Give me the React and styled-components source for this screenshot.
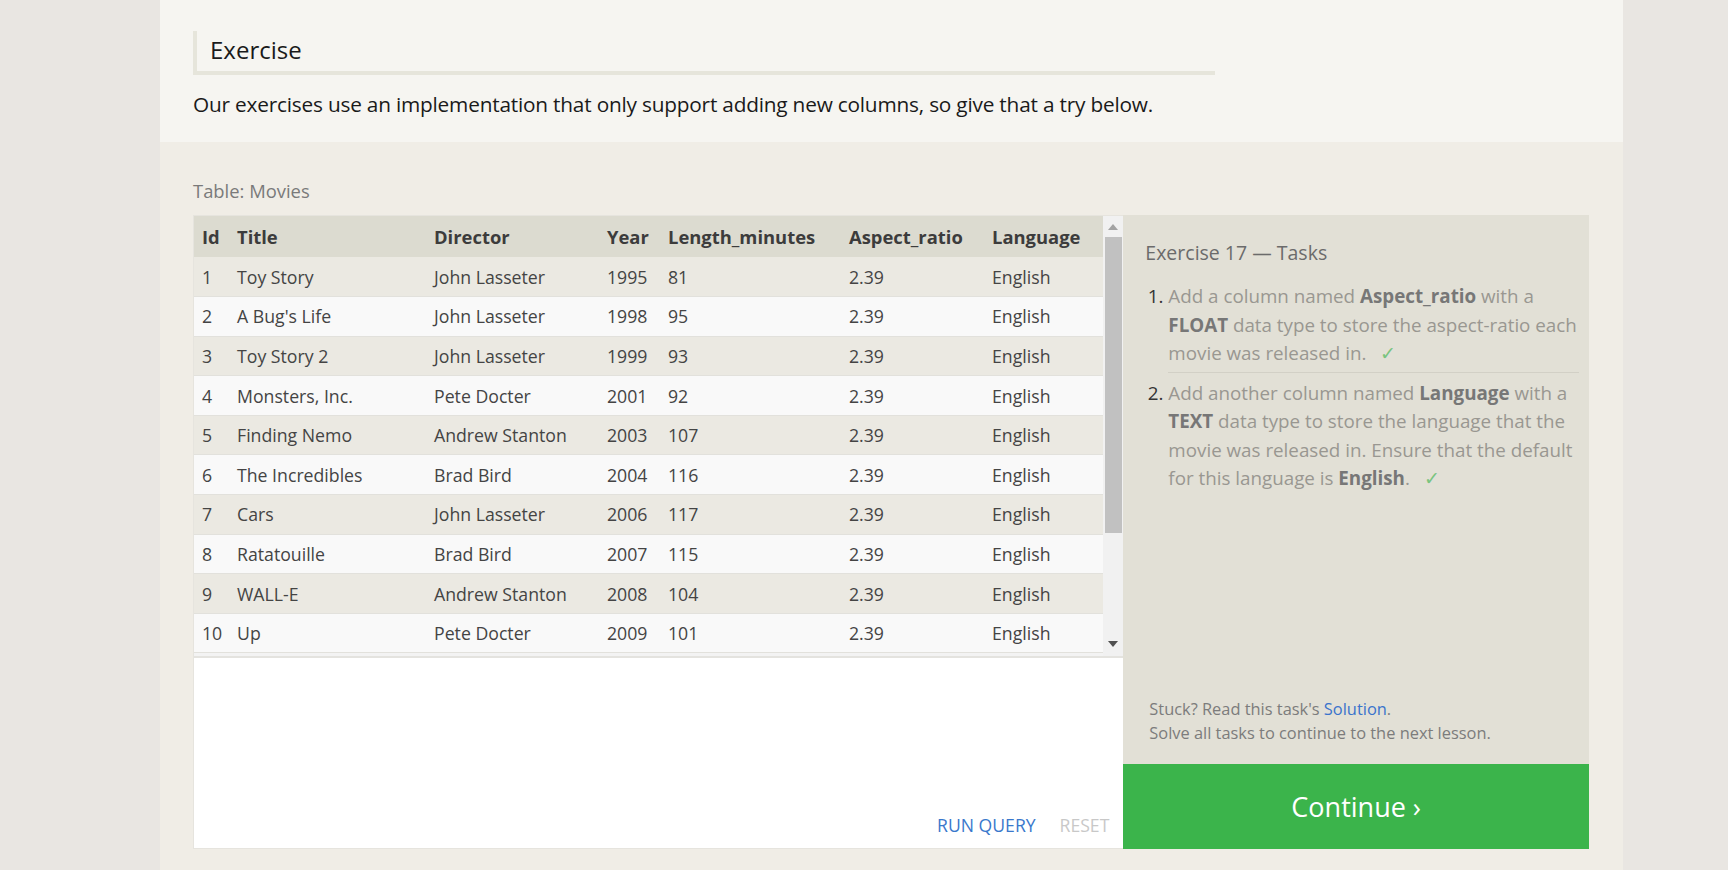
import React from 'react';
import styled, { createGlobalStyle } from 'styled-components';

const GlobalStyle = createGlobalStyle`
  html, body {
    margin: 0;
    padding: 0;
    background: #e9e6e2;
    font-family: "Open Sans", "Noto Sans", sans-serif;
  }
  * { box-sizing: border-box; }
`;

const movies = [
  [1, 'Toy Story', 'John Lasseter', 1995, 81],
  [2, "A Bug's Life", 'John Lasseter', 1998, 95],
  [3, 'Toy Story 2', 'John Lasseter', 1999, 93],
  [4, 'Monsters, Inc.', 'Pete Docter', 2001, 92],
  [5, 'Finding Nemo', 'Andrew Stanton', 2003, 107],
  [6, 'The Incredibles', 'Brad Bird', 2004, 116],
  [7, 'Cars', 'John Lasseter', 2006, 117],
  [8, 'Ratatouille', 'Brad Bird', 2007, 115],
  [9, 'WALL-E', 'Andrew Stanton', 2008, 104],
  [10, 'Up', 'Pete Docter', 2009, 101],
];

const columns = [
  { name: 'Id', width: 35 },
  { name: 'Title', width: 197 },
  { name: 'Director', width: 173 },
  { name: 'Year', width: 61 },
  { name: 'Length_minutes', width: 181 },
  { name: 'Aspect_ratio', width: 143 },
  { name: 'Language', width: 119 },
];

const Arrow = ({ up, color }) => (
  <svg width="10" height="6" viewBox="0 0 10 6">
    <path d={up ? 'M0 6 L5 0 L10 6 Z' : 'M0 0 L10 0 L5 6 Z'} fill={color} />
  </svg>
);

const App = () => (
  <>
    <GlobalStyle />
    <Page>
      <Lesson>
        <Intro>
          <Heading>Exercise</Heading>
          <Lead>
            Our exercises use an implementation that only support adding new columns, so give that a try below.
          </Lead>
        </Intro>

        <ExerciseArea>
          <TableLabel>Table: Movies</TableLabel>
          <Workspace>
            <EditorPane>
              <ResultsArea>
                <Results>
                  <colgroup>
                    {columns.map((c) => (
                      <col key={c.name} style={{ width: c.width }} />
                    ))}
                  </colgroup>
                  <thead>
                    <tr>
                      {columns.map((c) => (
                        <HeadCell key={c.name}>{c.name}</HeadCell>
                      ))}
                    </tr>
                  </thead>
                  <tbody>
                    {movies.map((m, i) => (
                      <Row key={m[0]} $odd={i % 2 === 0}>
                        {m.map((v, j) => (
                          <Cell key={j}>{v}</Cell>
                        ))}
                        <Cell>2.39</Cell>
                        <Cell>English</Cell>
                      </Row>
                    ))}
                  </tbody>
                </Results>
                <ScrollTrack>
                  <ScrollButton>
                    <Arrow up color="#a3a3a3" />
                  </ScrollButton>
                  <ScrollThumb />
                  <ScrollButton $bottom>
                    <Arrow color="#505050" />
                  </ScrollButton>
                </ScrollTrack>
              </ResultsArea>
              <QueryArea>
                <QueryActions>
                  <ActionLink>RUN QUERY</ActionLink>
                  <ActionLink $disabled>RESET</ActionLink>
                </QueryActions>
              </QueryArea>
            </EditorPane>

            <TaskPanel>
              <TaskBody>
                <TaskTitle>Exercise 17 — Tasks</TaskTitle>
                <TaskList>
                  <Task>
                    Add a column named <b>Aspect_ratio</b> with a <b>FLOAT</b> data type to store the
                    aspect-ratio each movie was released in.<Check>✓</Check>
                  </Task>
                  <Task>
                    Add another column named <b>Language</b> with a <b>TEXT</b> data type to store the
                    language that the movie was released in. Ensure that the default for this language
                    is <b>English</b>.<Check>✓</Check>
                  </Task>
                </TaskList>
              </TaskBody>
              <Help>
                Stuck? Read this task's <HelpLink>Solution</HelpLink>.
                <br />
                Solve all tasks to continue to the next lesson.
              </Help>
              <ContinueButton>Continue ›</ContinueButton>
            </TaskPanel>
          </Workspace>
        </ExerciseArea>
      </Lesson>
    </Page>
  </>
);

const Page = styled.div`
  height: 870px;
  overflow: hidden;
`;

const Lesson = styled.div`
  margin-left: 160px;
  width: 1463px;
  height: 870px;
  background: #f0ede6;
`;

const Intro = styled.div`
  background: #f6f5f1;
  height: 142px;
  padding: 31px 33px 0;
`;

const Heading = styled.h2`
  margin: 0;
  width: 1022px;
  height: 44px;
  border-left: 4px solid #e6e5db;
  border-bottom: 4px solid #e6e5db;
  padding-left: 13px;
  font-size: 24px;
  font-weight: 400;
  line-height: 38px;
  color: #1a1a1a;
`;

const Lead = styled.p`
  margin: 15px 0 0;
  font-size: 20.8px;
  line-height: 28px;
  color: #1a1a1a;
  letter-spacing: -0.2px;
`;

const ExerciseArea = styled.div`
  padding: 35px 34px 0 33px;
`;

const TableLabel = styled.div`
  font-size: 18.4px;
  line-height: 27px;
  color: #7a7a7a;
  margin-bottom: 11px;
`;

const Workspace = styled.div`
  display: flex;
  height: 634px;
`;

const EditorPane = styled.div`
  width: 931px;
  background: #fff;
  border: 1px solid #e6e4de;
  border-right: none;
  display: flex;
  flex-direction: column;
`;

const ResultsArea = styled.div`
  display: flex;
  height: 442px;
  border-bottom: 2px solid #e4e3df;
  background: #f3f3f3;
`;

const Results = styled.table`
  width: 909px;
  table-layout: fixed;
  border-collapse: collapse;
  align-self: flex-start;
  font-size: 17.7px;
  color: #444;
`;

const HeadCell = styled.th`
  height: 41px;
  padding: 0 0 0 8px;
  background: #dcdbd0;
  text-align: left;
  font-weight: 700;
  font-size: 18.4px;
  color: #3c3c3c;
  white-space: nowrap;
`;

const Row = styled.tr`
  height: 39.6px;
  background: ${(p) => (p.$odd ? '#ebe9e2' : '#f9f9f9')};
  border-bottom: 1px solid #e2e1dc;
`;

const Cell = styled.td`
  padding: 0 0 0 8px;
  white-space: nowrap;
`;

const ScrollTrack = styled.div`
  width: 20px;
  height: 100%;
  display: flex;
  flex-direction: column;
  align-items: center;
  background: #f1f1f1;
`;

const ScrollButton = styled.div`
  height: 21px;
  margin-top: ${(p) => (p.$bottom ? 'auto' : '0')};
  display: flex;
  align-items: center;
  justify-content: center;
  padding-bottom: ${(p) => (p.$bottom ? '4px' : '0')};
`;

const ScrollThumb = styled.div`
  width: 17px;
  height: 296px;
  background: #c1c1c1;
`;

const QueryArea = styled.div`
  flex: 1;
  display: flex;
  align-items: flex-end;
  justify-content: flex-end;
  padding: 0 14px 10px 0;
`;

const QueryActions = styled.div`
  display: flex;
  gap: 24px;
`;

const ActionLink = styled.span`
  font-size: 17.6px;
  line-height: 26px;
  color: ${(p) => (p.$disabled ? '#c8c8c8' : '#3a78cc')};
`;

const TaskPanel = styled.div`
  width: 466px;
  background: #e2e0d6;
  display: flex;
  flex-direction: column;
`;

const TaskBody = styled.div`
  flex: 1;
  padding: 24px 10px 0 22px;
`;

const TaskTitle = styled.div`
  font-size: 19.5px;
  line-height: 28px;
  color: #6b6b6b;
`;

const TaskList = styled.ol`
  margin: 15px 0 0;
  padding-left: 23px;
  color: #333;
`;

const Task = styled.li`
  font-size: 18.8px;
  line-height: 28.5px;
  color: #999791;
  padding-bottom: 4px;
  margin-bottom: 6px;

  &::marker {
    color: #333;
  }

  &:first-child {
    border-bottom: 1px solid #d2d0c6;
  }

  b {
    color: #777;
  }
`;

const Check = styled.span`
  color: #79c47f;
  margin-left: 14px;
`;

const Help = styled.div`
  padding: 0 0 19px 26px;
  font-size: 16.4px;
  line-height: 24px;
  color: #7c7c7c;
`;

const HelpLink = styled.span`
  color: #3a73cc;
`;

const ContinueButton = styled.div`
  height: 85px;
  background: #3bb44b;
  color: #fff;
  display: flex;
  align-items: center;
  justify-content: center;
  font-size: 27px;
`;

export default App;
